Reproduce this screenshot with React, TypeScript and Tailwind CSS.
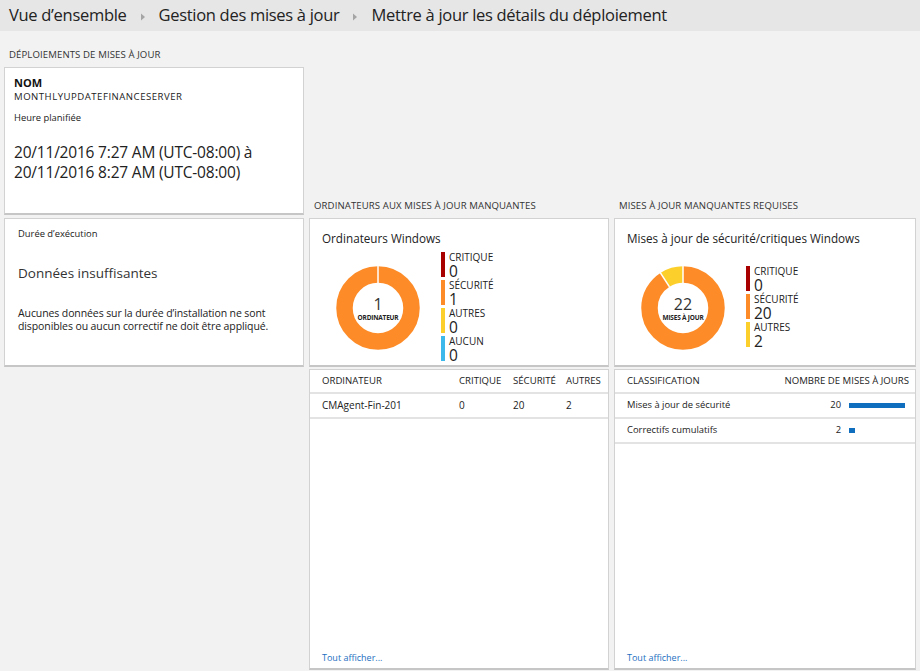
import React from "react";

type LegendItem = { label: string; value: number; color: string };

const legendA: LegendItem[] = [
  { label: "CRITIQUE", value: 0, color: "bg-[#a80000]" },
  { label: "SÉCURITÉ", value: 1, color: "bg-[#fd8c28]" },
  { label: "AUTRES", value: 0, color: "bg-[#fccf2a]" },
  { label: "AUCUN", value: 0, color: "bg-[#3cb8ea]" },
];

const legendB: LegendItem[] = [
  { label: "CRITIQUE", value: 0, color: "bg-[#a80000]" },
  { label: "SÉCURITÉ", value: 20, color: "bg-[#fd8c28]" },
  { label: "AUTRES", value: 2, color: "bg-[#fccf2a]" },
];

function Chevron() {
  return (
    <svg width="6" height="8" viewBox="0 0 6 8" className="mx-[13px] mt-[2px]">
      <path d="M1 0.5 L5 4 L1 7.5 Z" fill="#a5a5a5" />
    </svg>
  );
}

function SectionLabel({ children }: { children: React.ReactNode }) {
  return (
    <div className="h-[22px] pl-[5px] pt-[3px] text-[9.6px] leading-[13px] text-[#333] tracking-[0.1px]">{children}</div>
  );
}

function Card({ className = "", children }: { className?: string; children?: React.ReactNode }) {
  return (
    <div className={`bg-white border border-[#d2d2d2] border-b-2 border-b-[#c6c6c6] ${className}`}>{children}</div>
  );
}

function Donut({ parts, big, small }: { parts: { value: number; color: string }[]; big: string; small: string }) {
  const r = 33.5;
  const c = 2 * Math.PI * r;
  const total = parts.reduce((s, p) => s + p.value, 0);
  const a = (-2 / 22) * 2 * Math.PI;
  let offset = 0;
  return (
    <div className="relative w-[84px] h-[84px]">
      <svg width="84" height="84" viewBox="0 0 84 84">
        <g transform="rotate(-90 42 42)">
          {parts.map((p, i) => {
            const len = (p.value / total) * c;
            const el = (
              <circle
                key={i}
                cx="42"
                cy="42"
                r={r}
                fill="none"
                stroke={p.color}
                strokeWidth="16.5"
                strokeDasharray={`${len} ${c - len}`}
                strokeDashoffset={-offset}
              />
            );
            offset += len;
            return el;
          })}
        </g>
        <line x1="42" y1="0" x2="42" y2="18" stroke="#fff" strokeWidth="1.5" />
        {parts.length > 1 && (
          <line
            x1={42 + 25 * Math.sin(a)}
            y1={42 - 25 * Math.cos(a)}
            x2={42 + 43 * Math.sin(a)}
            y2={42 - 43 * Math.cos(a)}
            stroke="#fff"
            strokeWidth="1.5"
          />
        )}
      </svg>
      <div className="absolute inset-0 flex flex-col items-center justify-center pt-[2px]">
        <div className="text-[16px] leading-[18px] text-[#333]">{big}</div>
        <div className="text-[6.5px] leading-[10px] font-bold text-[#222] tracking-[-0.2px]">{small}</div>
      </div>
    </div>
  );
}

function Legend({ items }: { items: LegendItem[] }) {
  return (
    <div className="flex flex-col">
      {items.map((it) => (
        <div key={it.label} className="flex gap-[4px] h-[28px]">
          <div className={`w-[4px] h-[25px] ${it.color}`} />
          <div className="flex flex-col -mt-[1px]">
            <div className="text-[10px] leading-[12px] text-[#222]">{it.label}</div>
            <div className="text-[15.5px] leading-[16px] text-[#222]">{it.value}</div>
          </div>
        </div>
      ))}
    </div>
  );
}

function ChartCard({
  title,
  donut,
  legend,
}: {
  title: string;
  donut: React.ReactNode;
  legend: React.ReactNode;
}) {
  return (
    <Card className="h-[149px] px-[12px] pt-[10px]">
      <div className="text-[11.7px] leading-[18px] text-[#222]">{title}</div>
      <div className="flex items-center h-[112px] mt-[5px]">
        <div className="ml-[14px]">{donut}</div>
        <div className="ml-[21px]">{legend}</div>
      </div>
    </Card>
  );
}

export default function App() {
  return (
    <div className="w-[920px] h-[671px] bg-[#f2f2f2] font-['Open_Sans',sans-serif] text-[#222] overflow-hidden">
      <div className="h-[31px] bg-[#e6e6e6] flex items-center pl-[9px] text-[16.5px] text-[#222] tracking-[-0.3px]">
        <span>Vue d’ensemble</span>
        <Chevron />
        <span>Gestion des mises à jour</span>
        <Chevron />
        <span>Mettre à jour les détails du déploiement</span>
      </div>

      <div className="flex gap-[5px] pl-[4px] pt-[14px]">
        {/* left column */}
        <div className="w-[300px] flex flex-col">
          <SectionLabel>DÉPLOIEMENTS DE MISES À JOUR</SectionLabel>
          <Card className="h-[148px] px-[9px] pt-[8px]">
            <div className="text-[11px] leading-[14px] font-bold text-[#111]">NOM</div>
            <div className="text-[9.6px] leading-[13px] text-[#222] tracking-[0.5px]">MONTHLYUPDATEFINANCESERVER</div>
            <div className="text-[9.4px] leading-[13px] mt-[8px] text-[#222]">Heure planifiée</div>
            <div className="text-[15.5px] leading-[20px] mt-[18px] text-[#222] tracking-[-0.2px]">
              20/11/2016 7:27 AM (UTC-08:00) à
              <br />
              20/11/2016 8:27 AM (UTC-08:00)
            </div>
          </Card>
          <Card className="h-[149px] mt-[3px] px-[13px] pt-[8px]">
            <div className="text-[9.4px] leading-[13px] text-[#222]">Durée d’exécution</div>
            <div className="text-[13.5px] leading-[18px] mt-[24px] text-[#333]">Données insuffisantes</div>
            <div className="text-[10.5px] leading-[13px] mt-[25px] text-[#222] tracking-[-0.1px]">
              Aucunes données sur la durée d’installation ne sont
              <br />
              disponibles ou aucun correctif ne doit être appliqué.
            </div>
          </Card>
        </div>

        {/* middle column */}
        <div className="w-[300px] flex flex-col pt-[151px]">
          <SectionLabel>ORDINATEURS AUX MISES À JOUR MANQUANTES</SectionLabel>
          <ChartCard
            title="Ordinateurs Windows"
            donut={<Donut parts={[{ value: 1, color: "#fd8c28" }]} big="1" small="ORDINATEUR" />}
            legend={<Legend items={legendA} />}
          />
          <Card className="h-[301px] mt-[2px] flex flex-col">
            <div className="grid grid-cols-[137px_54px_53px_1fr] pl-[12px] h-[24px] items-center border-b-2 border-[#e3e3e3] text-[9.6px] text-[#222]">
              <span>ORDINATEUR</span>
              <span>CRITIQUE</span>
              <span>SÉCURITÉ</span>
              <span>AUTRES</span>
            </div>
            <div className="grid grid-cols-[137px_54px_53px_1fr] pl-[12px] h-[25px] items-center border-b-2 border-[#e3e3e3] text-[10px] text-[#222]">
              <span>CMAgent-Fin-201</span>
              <span>0</span>
              <span>20</span>
              <span>2</span>
            </div>
            <div className="flex-1" />
            <div className="pl-[12px] pb-[4px] text-[9px] text-[#1c6fc1]">Tout afficher...</div>
          </Card>
        </div>

        {/* right column */}
        <div className="w-[302px] flex flex-col pt-[151px]">
          <SectionLabel>MISES À JOUR MANQUANTES REQUISES</SectionLabel>
          <ChartCard
            title="Mises à jour de sécurité/critiques Windows"
            donut={
              <Donut
                parts={[
                  { value: 20, color: "#fd8c28" },
                  { value: 2, color: "#fccf2a" },
                ]}
                big="22"
                small="MISES À JOUR"
              />
            }
            legend={<Legend items={legendB} />}
          />
          <Card className="h-[301px] mt-[2px] flex flex-col">
            <div className="flex justify-between pl-[12px] pr-[6px] h-[24px] items-center border-b-2 border-[#e3e3e3] text-[9.6px] text-[#222]">
              <span>CLASSIFICATION</span>
              <span>NOMBRE DE MISES À JOURS</span>
            </div>
            {[
              { name: "Mises à jour de sécurité", n: 20 },
              { name: "Correctifs cumulatifs", n: 2 },
            ].map((r) => (
              <div
                key={r.name}
                className="flex pl-[12px] h-[25px] items-center border-b-2 border-[#e3e3e3] text-[9.4px] text-[#222]"
              >
                <span className="flex-1">{r.name}</span>
                <span className="w-[30px] text-right">{r.n}</span>
                <div className="w-[56px] ml-[8px] mr-[10px] h-[5px]">
                  <div className="h-[5px] bg-[#106ebe]" style={{ width: `${(r.n / 20) * 56}px` }} />
                </div>
              </div>
            ))}
            <div className="flex-1" />
            <div className="pl-[12px] pb-[4px] text-[9px] text-[#1c6fc1]">Tout afficher...</div>
          </Card>
        </div>
      </div>
    </div>
  );
}
